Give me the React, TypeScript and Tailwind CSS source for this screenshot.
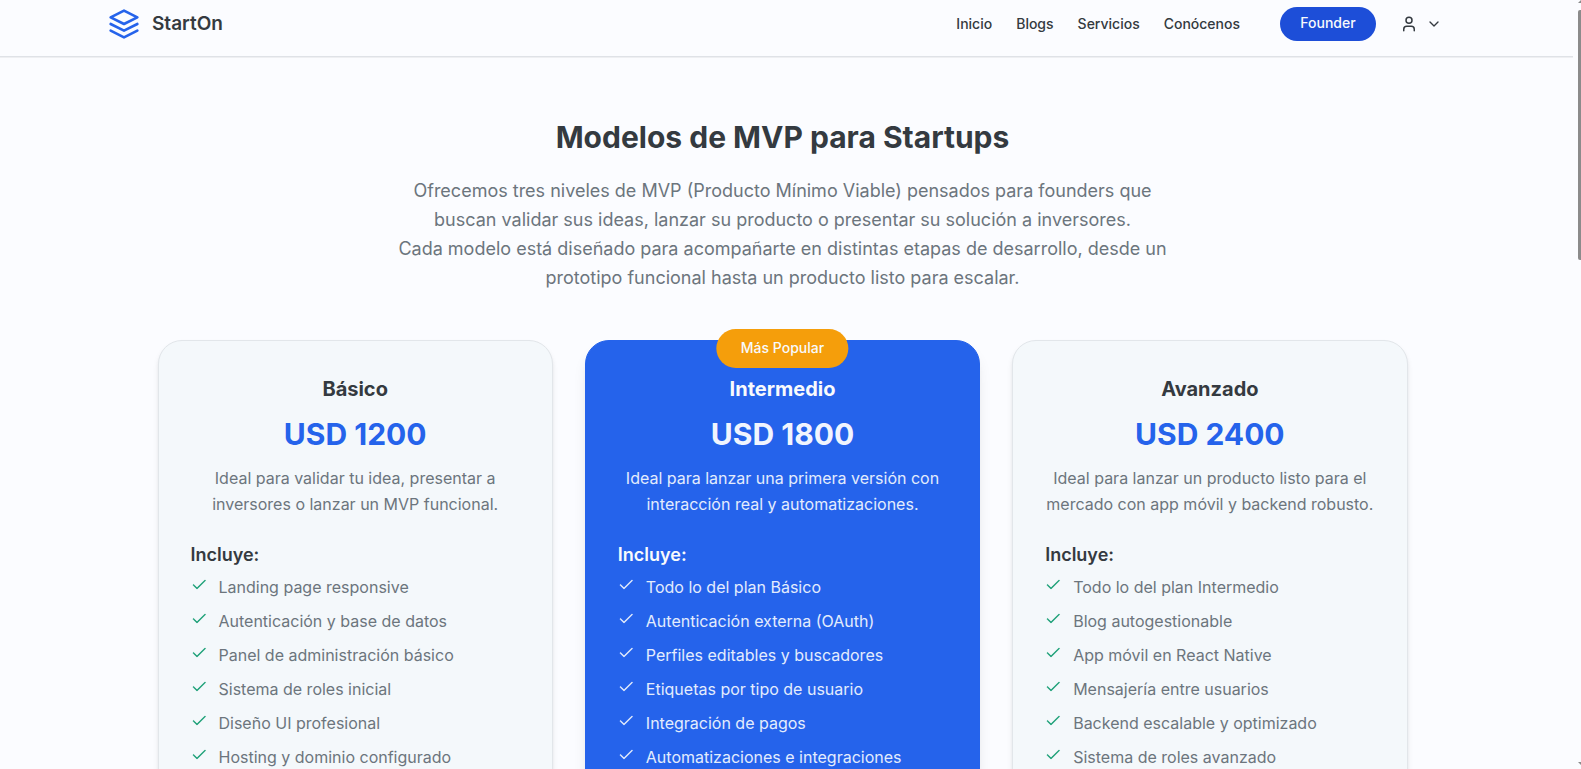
import { ChevronDown, User } from "lucide-react";
import { FiLayers } from "react-icons/fi";
import { PiCheck } from "react-icons/pi";
import clsx from "clsx";

type Plan = {
  name: string;
  price: string;
  summary: string;
  features: string[];
  popular?: boolean;
};

const links = ["Inicio", "Blogs", "Servicios", "Conócenos"];

const plans: Plan[] = [
  {
    name: "Básico",
    price: "USD 1200",
    summary: "Ideal para validar tu idea, presentar a inversores o lanzar un MVP funcional.",
    features: [
      "Landing page responsive",
      "Autenticación y base de datos",
      "Panel de administración básico",
      "Sistema de roles inicial",
      "Diseño UI profesional",
      "Hosting y dominio configurado",
    ],
  },
  {
    name: "Intermedio",
    price: "USD 1800",
    summary: "Ideal para lanzar una primera versión con interacción real y automatizaciones.",
    features: [
      "Todo lo del plan Básico",
      "Autenticación externa (OAuth)",
      "Perfiles editables y buscadores",
      "Etiquetas por tipo de usuario",
      "Integración de pagos",
      "Automatizaciones e integraciones",
    ],
    popular: true,
  },
  {
    name: "Avanzado",
    price: "USD 2400",
    summary: "Ideal para lanzar un producto listo para el mercado con app móvil y backend robusto.",
    features: [
      "Todo lo del plan Intermedio",
      "Blog autogestionable",
      "App móvil en React Native",
      "Mensajería entre usuarios",
      "Backend escalable y optimizado",
      "Sistema de roles avanzado",
    ],
  },
];

function Header() {
  return (
    <header className="border-b border-[#dfe2e7] pr-[7px] shadow-2xs">
      <div className="mx-auto flex max-w-[1400px] items-center justify-between px-[25px] pt-[7px] pb-[15px]">
        <a href="#inicio" className="-my-1 flex items-center gap-3">
          <FiLayers size={32} className="text-[#2563eb]" aria-hidden />
          <span className="text-[19px] font-semibold text-[#343a40]">StartOn</span>
        </a>
        <div className="flex items-center">
          <nav className="mr-10 flex gap-6 text-sm font-medium text-[#343a40]">
            {links.map((label) => (
              <a key={label} href="#">
                {label}
              </a>
            ))}
          </nav>
          <button
            type="button"
            className="mr-6 h-[34px] w-24 rounded-full bg-[#1d4ed8] pb-0.5 text-sm font-medium text-[#f8fafc]"
          >
            Founder
          </button>
          <button type="button" aria-label="Cuenta" className="mr-4 flex items-center gap-2 text-[#343a40]">
            <User size={18} />
            <ChevronDown size={16} />
          </button>
        </div>
      </div>
    </header>
  );
}

function PlanCard({ plan }: { plan: Plan }) {
  const { popular } = plan;
  return (
    <article
      className={clsx(
        "relative rounded-3xl border px-8 pt-8 pb-10",
        popular
          ? "border-[#2563eb] bg-[#2563eb] text-[#f8fafc] shadow-lg"
          : "border-[#e2e6ea] bg-[#f4f8fb] text-[#343a40] shadow-md",
      )}
    >
      {popular && (
        <span className="absolute -top-3 left-1/2 -translate-x-1/2 rounded-full bg-[#f59e0b] px-6 pt-[7px] pb-[9px] text-sm leading-[23px] font-medium whitespace-nowrap text-[#f8fafc]">
          Más Popular
        </span>
      )}
      <h2 className="text-center text-xl leading-8 font-bold">{plan.name}</h2>
      <p
        className={clsx(
          "mt-2 text-center text-3xl leading-[42px] font-bold",
          popular ? "text-[#f1f5fe]" : "text-[#2563eb]",
        )}
      >
        {plan.price}
      </p>
      <p className={clsx("mt-[10px] text-center leading-[26px]", popular ? "text-[#e3ecfd]" : "text-[#6c757d]")}>
        {plan.summary}
      </p>
      <h3 className="mt-[23px] text-lg leading-[29px] font-semibold">Incluye:</h3>
      <ul className={clsx("mt-[5px] flex flex-col gap-2", popular ? "text-[#e3ecfd]" : "text-[#6c757d]")}>
        {plan.features.map((feature) => (
          <li key={feature} className="flex items-start gap-3 leading-[26px]">
            <PiCheck
              size={16}
              aria-hidden
              className={clsx(
                "mt-0.5 shrink-0 stroke-current stroke-[8px]",
                popular ? "text-[#f8fafc]" : "text-[#059669]",
              )}
            />
            <span>{feature}</span>
          </li>
        ))}
      </ul>
    </article>
  );
}

function ScrollRail() {
  return (
    <div aria-hidden className="flex h-screen w-[3px] shrink-0 flex-col overflow-hidden">
      <svg width="3" height="3" viewBox="0 0 3 3" fill="#8b8b8b">
        <path d="M3 0v3H0z" />
      </svg>
      <div className="mt-[7px] h-[250px] rounded-l-xs bg-[#8b8b8b]" />
      <svg className="mt-auto mb-1" width="3" height="3" viewBox="0 0 3 3" fill="#8b8b8b">
        <path d="M0 0h3v3z" />
      </svg>
    </div>
  );
}

export default function App() {
  return (
    <div className="flex h-screen overflow-hidden bg-[#fbfcff] font-['Inter',sans-serif]">
      <div className="min-w-0 flex-1 pr-[5px]">
        <Header />
        <main className="pr-2">
          <section className="mx-auto max-w-7xl px-[15px] pt-14">
            <h1 className="text-center text-3xl leading-[48px] font-bold text-[#343a40]">
              Modelos de MVP para Startups
            </h1>
            <p className="mx-auto mt-[15px] max-w-[780px] text-center text-lg leading-[29px] text-[#6c757d]">
              Ofrecemos tres niveles de MVP (Producto Mínimo Viable) pensados para founders que buscan validar
              sus ideas, lanzar su producto o presentar su solución a inversores.
              <br />
              Cada modelo está diseñado para acompañarte en distintas etapas de desarrollo, desde un prototipo
              funcional hasta un producto listo para escalar.
            </p>
            <div className="mt-12 grid grid-cols-3 gap-8">
              {plans.map((plan) => (
                <PlanCard key={plan.name} plan={plan} />
              ))}
            </div>
          </section>
        </main>
      </div>
      <ScrollRail />
    </div>
  );
}
